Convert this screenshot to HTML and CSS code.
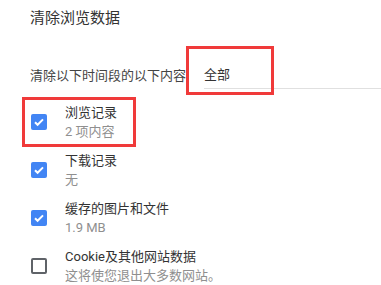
FILE: index.html
```html
<!DOCTYPE html>
<html lang="zh-CN">
<head>
    <meta charset="UTF-8">
    <title>清除浏览数据</title>
    <link rel="stylesheet" href="styles.css">
</head>
<body>
    <div class="dialog">
        <div class="title">清除浏览数据</div>

        <div class="range">
            <span class="range-label">清除以下时间段的以下内容</span>
            <div class="select">
                全部
                <div class="mark mark-select"></div>
            </div>
        </div>

        <div class="items">
            <div class="item">
                <span class="box checked">
                    <svg viewBox="0 0 16 16" width="16" height="16"><path d="M4 8.2l2.6 2.6L12 5.4" fill="none" stroke="#fff" stroke-width="2"/></svg>
                </span>
                <div class="item-text">
                    <div class="item-title">浏览记录</div>
                    <div class="item-sub">2 项内容</div>
                </div>
                <div class="mark mark-item"></div>
            </div>
            <div class="item">
                <span class="box checked">
                    <svg viewBox="0 0 16 16" width="16" height="16"><path d="M4 8.2l2.6 2.6L12 5.4" fill="none" stroke="#fff" stroke-width="2"/></svg>
                </span>
                <div class="item-text">
                    <div class="item-title">下载记录</div>
                    <div class="item-sub">无</div>
                </div>
            </div>
            <div class="item">
                <span class="box checked">
                    <svg viewBox="0 0 16 16" width="16" height="16"><path d="M4 8.2l2.6 2.6L12 5.4" fill="none" stroke="#fff" stroke-width="2"/></svg>
                </span>
                <div class="item-text">
                    <div class="item-title">缓存的图片和文件</div>
                    <div class="item-sub">1.9 MB</div>
                </div>
            </div>
            <div class="item">
                <span class="box"></span>
                <div class="item-text">
                    <div class="item-title">Cookie及其他网站数据</div>
                    <div class="item-sub">这将使您退出大多数网站。</div>
                </div>
            </div>
        </div>
    </div>
</body>
</html>
```

FILE: styles.css
```css
body {
    margin: 0;
    background: #fff;
    font-family: Roboto, "Noto Sans CJK SC", sans-serif;
    color: #333;
    overflow: hidden;
}
.dialog {
    padding-left: 30px;
}
.title {
    font-size: 15px;
    line-height: 20px;
    padding-top: 8px;
}
.range {
    display: flex;
    align-items: flex-end;
    margin-top: 37px;
    position: relative;
}
.range-label {
    font-size: 13px;
    line-height: 20px;
    color: #444;
    padding-bottom: 3px;
}
.select {
    flex: 1;
    margin-left: 18px;
    font-size: 13px;
    line-height: 20px;
    padding-bottom: 3px;
    border-bottom: 1px solid #e0e0e0;
    position: relative;
}
.mark {
    position: absolute;
    border: 3px solid #f03a3a;
}
.mark-select {
    left: -18px;
    top: -19px;
    width: 82px;
    height: 43px;
}
.items {
    margin-top: 9px;
}
.item {
    display: flex;
    align-items: center;
    height: 48px;
    position: relative;
}
.box {
    width: 16px;
    height: 16px;
    margin-left: 1px;
    margin-right: 18px;
    border-radius: 2px;
    box-sizing: border-box;
    border: 2px solid #5f6368;
    flex-shrink: 0;
}
.box.checked {
    border: none;
    background: #4285f4;
}
.box svg {
    display: block;
}
.item-title {
    font-size: 13px;
    line-height: 20px;
    color: #333;
}
.item-sub {
    font-size: 13px;
    line-height: 18px;
    color: #8f8f8f;
}
.mark-item {
    left: -8px;
    top: -1px;
    width: 108px;
    height: 44px;
}
```
